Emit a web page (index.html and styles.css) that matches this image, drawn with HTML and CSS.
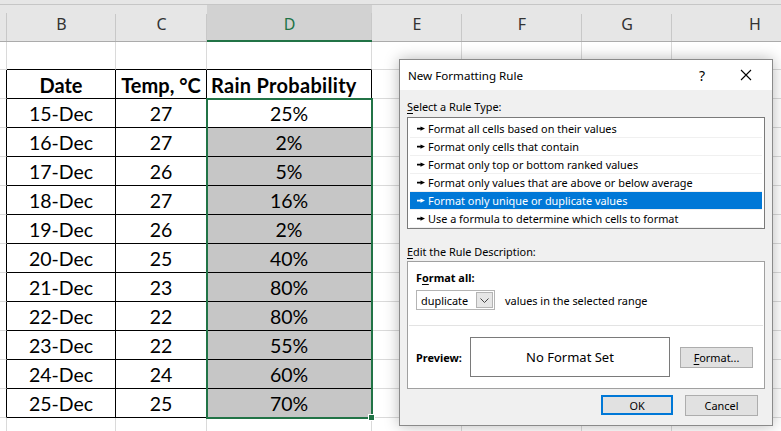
FILE: index.html
```html
<!DOCTYPE html>
<html lang="en">
<head>
  <meta charset="UTF-8">
  <title>New Formatting Rule</title>
  <link rel="stylesheet" href="styles.css">
</head>
<body>
<div class="sheet">
  <div class="topbar"></div>
  <div class="row heads">
    <div class="cell rh"></div>
    <div class="cell cb">B</div>
    <div class="cell cc">C</div>
    <div class="cell cd sel">D</div>
    <div class="cell ce">E</div>
    <div class="cell cf">F</div>
    <div class="cell cg">G</div>
    <div class="cell ch">H</div>
  </div>
  <div class="row first">
    <div class="cell rh"></div>
    <div class="cell cb tt"></div>
    <div class="cell cc tt"></div>
    <div class="cell cd tt"></div>
    <div class="cell ce"></div>
    <div class="cell cf"></div>
    <div class="cell cg"></div>
    <div class="cell ch"></div>
  </div>
  <div class="row">
    <div class="cell rh tl"></div>
    <div class="cell cb t bold">Date</div>
    <div class="cell cc t bold">Temp, °C</div>
    <div class="cell cd t bold">Rain Probability</div>
    <div class="cell ce"></div><div class="cell cf"></div><div class="cell cg"></div><div class="cell ch"></div>
  </div>
  <div class="row">
    <div class="cell rh tl"></div>
    <div class="cell cb t">15-Dec</div><div class="cell cc t">27</div><div class="cell cd t">25%</div>
    <div class="cell ce"></div><div class="cell cf"></div><div class="cell cg"></div><div class="cell ch"></div>
  </div>
  <div class="row">
    <div class="cell rh tl"></div>
    <div class="cell cb t">16-Dec</div><div class="cell cc t">27</div><div class="cell cd t dup">2%</div>
    <div class="cell ce"></div><div class="cell cf"></div><div class="cell cg"></div><div class="cell ch"></div>
  </div>
  <div class="row">
    <div class="cell rh tl"></div>
    <div class="cell cb t">17-Dec</div><div class="cell cc t">26</div><div class="cell cd t dup">5%</div>
    <div class="cell ce"></div><div class="cell cf"></div><div class="cell cg"></div><div class="cell ch"></div>
  </div>
  <div class="row">
    <div class="cell rh tl"></div>
    <div class="cell cb t">18-Dec</div><div class="cell cc t">27</div><div class="cell cd t dup">16%</div>
    <div class="cell ce"></div><div class="cell cf"></div><div class="cell cg"></div><div class="cell ch"></div>
  </div>
  <div class="row">
    <div class="cell rh tl"></div>
    <div class="cell cb t">19-Dec</div><div class="cell cc t">26</div><div class="cell cd t dup">2%</div>
    <div class="cell ce"></div><div class="cell cf"></div><div class="cell cg"></div><div class="cell ch"></div>
  </div>
  <div class="row">
    <div class="cell rh tl"></div>
    <div class="cell cb t">20-Dec</div><div class="cell cc t">25</div><div class="cell cd t dup">40%</div>
    <div class="cell ce"></div><div class="cell cf"></div><div class="cell cg"></div><div class="cell ch"></div>
  </div>
  <div class="row">
    <div class="cell rh tl"></div>
    <div class="cell cb t">21-Dec</div><div class="cell cc t">23</div><div class="cell cd t dup">80%</div>
    <div class="cell ce"></div><div class="cell cf"></div><div class="cell cg"></div><div class="cell ch"></div>
  </div>
  <div class="row">
    <div class="cell rh tl"></div>
    <div class="cell cb t">22-Dec</div><div class="cell cc t">22</div><div class="cell cd t dup">80%</div>
    <div class="cell ce"></div><div class="cell cf"></div><div class="cell cg"></div><div class="cell ch"></div>
  </div>
  <div class="row">
    <div class="cell rh tl"></div>
    <div class="cell cb t">23-Dec</div><div class="cell cc t">22</div><div class="cell cd t dup">55%</div>
    <div class="cell ce"></div><div class="cell cf"></div><div class="cell cg"></div><div class="cell ch"></div>
  </div>
  <div class="row">
    <div class="cell rh tl"></div>
    <div class="cell cb t">24-Dec</div><div class="cell cc t">24</div><div class="cell cd t dup">60%</div>
    <div class="cell ce"></div><div class="cell cf"></div><div class="cell cg"></div><div class="cell ch"></div>
  </div>
  <div class="row">
    <div class="cell rh tl"></div>
    <div class="cell cb t">25-Dec</div><div class="cell cc t">25</div><div class="cell cd t dup">70%</div>
    <div class="cell ce"></div><div class="cell cf"></div><div class="cell cg"></div><div class="cell ch"></div>
  </div>
  <div class="row">
    <div class="cell rh"></div>
    <div class="cell cb"></div><div class="cell cc"></div><div class="cell cd"></div>
    <div class="cell ce"></div><div class="cell cf"></div><div class="cell cg"></div><div class="cell ch"></div>
  </div>

  <!-- selected range D4:D14 -->
  <div class="selection"><span class="handle"></span></div>

  <div class="dialog">
    <div class="title">
      <span class="title-text">New Formatting Rule</span>
      <span class="title-btn">?</span>
      <span class="title-btn close">
        <svg width="12" height="12" viewBox="0 0 12 12"><path d="M1 1L11 11M11 1L1 11" stroke="#000" stroke-width="1.1" fill="none"/></svg>
      </span>
    </div>
    <div class="body">
      <div class="label"><u>S</u>elect a Rule Type:</div>
      <div class="list">
        <div class="item"><svg class="arrow" width="8" height="5" viewBox="0 0 8 5"><path d="M0 1.8h4v1.6H0z M3.5 0.4L8 2.6L3.5 4.8z"/></svg>Format all cells based on their values</div>
        <div class="item"><svg class="arrow" width="8" height="5" viewBox="0 0 8 5"><path d="M0 1.8h4v1.6H0z M3.5 0.4L8 2.6L3.5 4.8z"/></svg>Format only cells that contain</div>
        <div class="item"><svg class="arrow" width="8" height="5" viewBox="0 0 8 5"><path d="M0 1.8h4v1.6H0z M3.5 0.4L8 2.6L3.5 4.8z"/></svg>Format only top or bottom ranked values</div>
        <div class="item"><svg class="arrow" width="8" height="5" viewBox="0 0 8 5"><path d="M0 1.8h4v1.6H0z M3.5 0.4L8 2.6L3.5 4.8z"/></svg>Format only values that are above or below average</div>
        <div class="item active"><svg class="arrow" width="8" height="5" viewBox="0 0 8 5"><path d="M0 1.8h4v1.6H0z M3.5 0.4L8 2.6L3.5 4.8z"/></svg>Format only unique or duplicate values</div>
        <div class="item"><svg class="arrow" width="8" height="5" viewBox="0 0 8 5"><path d="M0 1.8h4v1.6H0z M3.5 0.4L8 2.6L3.5 4.8z"/></svg>Use a formula to determine which cells to format</div>
      </div>
      <div class="label second"><u>E</u>dit the Rule Description:</div>
      <div class="desc">
        <div class="desc-top">
          <div class="strong">F<u>o</u>rmat all:</div>
          <div class="combo-row">
            <div class="combo">
              <span class="combo-text">duplicate</span>
              <span class="combo-btn">
                <svg width="9" height="5" viewBox="0 0 9 5"><path d="M0.5 0.5L4.5 4.5L8.5 0.5" stroke="#444" fill="none"/></svg>
              </span>
            </div>
            <span>values in the selected range</span>
          </div>
        </div>
        <div class="preview-row">
          <span class="strong">Preview:</span>
          <div class="preview">No Format Set</div>
          <button class="btn fmt"><u>F</u>ormat...</button>
        </div>
      </div>
      <div class="actions">
        <button class="btn ok">OK</button>
        <button class="btn">Cancel</button>
      </div>
    </div>
  </div>
</div>
</body>
</html>
```

FILE: styles.css
```css
body {
  margin: 0;
  background: #fff;
  overflow: hidden;
}

.sheet {
  position: relative;
  width: 781px;
  height: 431px;
  overflow: hidden;
  font-family: 'Lato', 'Liberation Sans', sans-serif;
  font-size: 19.5px;
  color: #000;
}

.topbar {
  height: 4px;
  background: #e6e6e6;
  border-bottom: 1px solid #c6c6c6;
}

.row {
  display: flex;
  height: 29px;
}

.row.first {
  height: 28px;
}

.cell {
  flex: none;
  box-sizing: border-box;
  height: 100%;
  border-right: 1px solid #dadada;
  border-bottom: 1px solid #dadada;
  display: flex;
  align-items: center;
  justify-content: center;
  white-space: nowrap;
}

.rh { width: 7px; }
.cb { width: 109px; }
.cc { width: 91px; }
.cd { width: 165px; }
.ce { width: 90px; }
.cf { width: 120px; }
.cg { width: 90px; }
.ch { width: 200px; }

/* column header strip */
.heads {
  height: 37px;
  background: #e6e6e6;
}

.heads .cell {
  border: none;
  border-bottom: 1px solid #ababab;
  background: linear-gradient(#c8c8c8, #c8c8c8) right bottom / 1px 27px no-repeat;
  font-family: 'Noto Sans', sans-serif;
  font-size: 16px;
  color: #333;
  padding-top: 2px;
}

.heads .rh {
  background: linear-gradient(#c8c8c8, #c8c8c8) right bottom / 1px 28px no-repeat;
}

.heads .ch {
  justify-content: flex-start;
  padding-left: 77px;
}

.heads .sel {
  background-color: #d2d2d2;
  color: #217346;
  border-bottom: 2px solid #217346;
}

/* the data table */
.t {
  border-right-color: #000;
  border-bottom-color: #000;
  padding-top: 1px;
}

.tl { border-right-color: #000; }
.tt { border-bottom-color: #000; }

.bold {
  font-weight: bold;
  font-size: 20px;
}

.cd.bold {
  justify-content: flex-start;
  padding-left: 4px;
  letter-spacing: 0.3px;
}

.dup { background: #c6c6c6; }

.selection {
  position: absolute;
  left: 206px;
  top: 98px;
  width: 167px;
  height: 321px;
  box-sizing: border-box;
  border: 2px solid #217346;
}

.handle {
  position: absolute;
  right: -4px;
  bottom: -4px;
  width: 5px;
  height: 5px;
  background: #217346;
  border: 1px solid #fff;
}

/* dialog */
.dialog {
  position: absolute;
  left: 399px;
  top: 59px;
  width: 374px;
  height: 367px;
  box-sizing: border-box;
  border: 1px solid #8a8a8a;
  background: #f0f0f0;
  box-shadow: 0 0 14px rgba(0, 0, 0, 0.28);
  font-family: 'Noto Sans', sans-serif;
  font-size: 10.9px;
  color: #000;
  display: flex;
  flex-direction: column;
}

.title {
  height: 30px;
  background: #fff;
  display: flex;
  align-items: center;
  padding-left: 8px;
  font-size: 11.6px;
}

.title-text { flex: 1; }

.title-btn {
  width: 44px;
  text-align: center;
  font-size: 14px;
}

.title-btn.close {
  display: flex;
  justify-content: center;
  padding-right: 4px;
}

.body {
  padding: 8px 7px 0 7px;
  display: flex;
  flex-direction: column;
}

.label {
  height: 18px;
  line-height: 18px;
}

.label.second {
  margin-top: 14px;
}

u {
  text-decoration-thickness: 1px;
  text-underline-offset: 2px;
}

.list {
  margin-top: 1px;
  height: 112px;
  box-sizing: border-box;
  border: 1px solid #7a7a7a;
  background: #fff;
  padding: 2px;
}

.item {
  height: 18px;
  box-sizing: border-box;
  border-bottom: 1px solid #f0f0f0;
  display: flex;
  align-items: center;
  padding-left: 7px;
}

.item .arrow {
  margin-right: 3px;
  fill: #000;
}

.item.active {
  background: #0078d7;
  color: #fff;
}

.item.active .arrow { fill: #fff; }

.desc {
  height: 128px;
  box-sizing: border-box;
  border: 1px solid #a0a0a0;
  background: #fff;
  padding: 0 1px;
  display: flex;
  flex-direction: column;
}

.desc-top {
  height: 64px;
  border-bottom: 1px solid #e3e3e3;
  padding: 8px 0 0 7px;
  box-sizing: border-box;
}

.strong { font-weight: bold; }

.combo-row {
  display: flex;
  align-items: center;
  gap: 10px;
  margin-top: 5px;
}

.combo {
  width: 79px;
  height: 20px;
  box-sizing: border-box;
  border: 1px solid #b4b4b4;
  display: flex;
  align-items: center;
  padding: 1px;
}

.combo-text {
  flex: 1;
  padding-left: 3px;
}

.combo-btn {
  width: 17px;
  height: 16px;
  box-sizing: border-box;
  border: 1px solid #b4b4b4;
  background: #e6e6e6;
  display: flex;
  align-items: center;
  justify-content: center;
}

.preview-row {
  flex: 1;
  display: flex;
  align-items: center;
  padding-left: 7px;
}

.preview-row .strong { width: 54px; }

.preview {
  width: 200px;
  height: 40px;
  box-sizing: border-box;
  border: 1px solid #7a7a7a;
  display: flex;
  align-items: center;
  justify-content: center;
  font-size: 13px;
  margin-right: 10px;
}

.btn {
  font-family: 'Noto Sans', sans-serif;
  font-size: 10.9px;
  color: #000;
  background: #e1e1e1;
  border: 1px solid #adadad;
  height: 21px;
  width: 73px;
  padding: 0;
}

.actions {
  display: flex;
  justify-content: flex-end;
  gap: 12px;
  margin-top: 6px;
  padding-right: 7px;
}

.ok {
  border: 2px solid #0078d7;
  width: 72px;
  height: 20px;
}
```
